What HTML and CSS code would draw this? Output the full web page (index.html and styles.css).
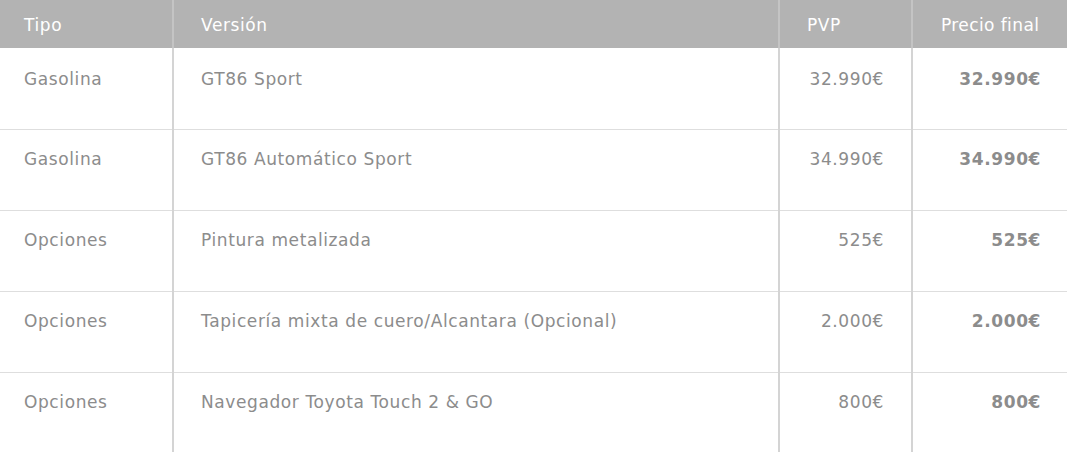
FILE: index.html
```html
<!DOCTYPE html>
<html lang="es">
<head>
<meta charset="utf-8">
<link rel="stylesheet" href="styles.css">
</head>
<body>
<table class="prices">
  <colgroup>
    <col class="w-tipo">
    <col class="w-ver">
    <col class="w-pvp">
    <col class="w-fin">
  </colgroup>
  <thead>
    <tr>
      <th class="c-tipo">Tipo</th>
      <th class="c-ver">Versión</th>
      <th class="c-pvp">PVP</th>
      <th class="c-fin">Precio final</th>
    </tr>
  </thead>
  <tbody>
    <tr><td class="c-tipo">Gasolina</td><td class="c-ver">GT86 Sport</td><td class="c-pvp">32.990€</td><td class="c-fin">32.990€</td></tr>
    <tr><td class="c-tipo">Gasolina</td><td class="c-ver">GT86 Automático Sport</td><td class="c-pvp">34.990€</td><td class="c-fin">34.990€</td></tr>
    <tr><td class="c-tipo">Opciones</td><td class="c-ver">Pintura metalizada</td><td class="c-pvp">525€</td><td class="c-fin">525€</td></tr>
    <tr><td class="c-tipo">Opciones</td><td class="c-ver">Tapicería mixta de cuero/Alcantara (Opcional)</td><td class="c-pvp">2.000€</td><td class="c-fin">2.000€</td></tr>
    <tr><td class="c-tipo">Opciones</td><td class="c-ver">Navegador Toyota Touch 2 &amp; GO</td><td class="c-pvp">800€</td><td class="c-fin">800€</td></tr>
  </tbody>
</table>
</body>
</html>
```

FILE: styles.css
```css
html, body {
  margin: 0;
  padding: 0;
  background: #fff;
}
body {
  font-family: "DejaVu Sans", Verdana, sans-serif;
  font-size: 17px;
  letter-spacing: 0.6px;
  color: #8c8c8c;
  overflow: hidden;
}
.prices {
  width: 1067px;
  border-collapse: collapse;
  table-layout: fixed;
}
.w-tipo { width: 173px; }
.w-ver { width: 606px; }
.w-pvp { width: 133px; }
.w-fin { width: 155px; }

.prices th {
  background: #b3b3b3;
  color: #fff;
  font-weight: normal;
  height: 48px;
  box-sizing: border-box;
  padding: 15px 0 0 0;
  text-align: left;
  vertical-align: top;
  white-space: nowrap;
  border-left: 2px solid #c4c4c4;
}
.prices td {
  height: 81px;
  box-sizing: border-box;
  padding: 19px 0 0 0;
  vertical-align: top;
  white-space: nowrap;
  border-top: 1px solid #dedede;
  border-left: 2px solid #d4d4d4;
}
.prices tbody tr:first-child td {
  border-top: none;
  padding-top: 21px;
}
.prices .c-tipo {
  border-left: none;
  padding-left: 24px;
}
.prices .c-ver { padding-left: 27px; }
.prices th.c-pvp { padding-left: 27px; }
.prices td.c-pvp { text-align: right; padding-right: 27px; }
.prices th.c-fin { padding-left: 28px; letter-spacing: 0.4px; }
.prices td.c-fin { text-align: right; padding-right: 26px; font-weight: bold; }
```
